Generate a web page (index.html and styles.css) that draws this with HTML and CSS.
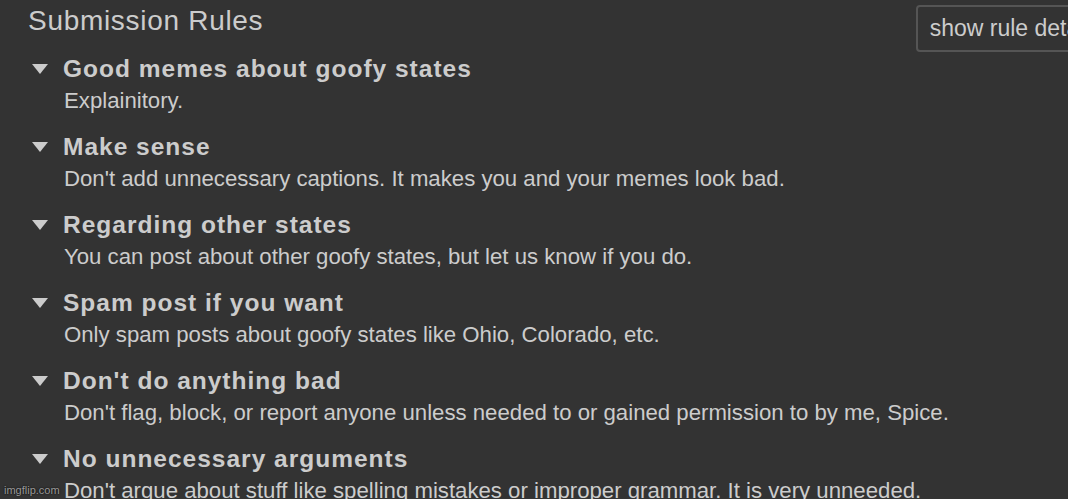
FILE: index.html
```html
<!DOCTYPE html>
<html>
<head>
	<title>Submission Rules</title>
	<link rel="stylesheet" href="styles.css">
</head>
<body>
	<div class="rules-panel">
		<div class="rules-header">
			<h2>Submission Rules</h2>
			<button class="toggle-details">show rule details</button>
		</div>

		<ul class="rule-list">
			<li class="rule">
				<div class="rule-title"><span class="caret"></span>Good memes about goofy states</div>
				<p class="rule-desc">Explainitory.</p>
			</li>
			<li class="rule">
				<div class="rule-title"><span class="caret"></span>Make sense</div>
				<p class="rule-desc">Don't add unnecessary captions. It makes you and your memes look bad.</p>
			</li>
			<li class="rule">
				<div class="rule-title"><span class="caret"></span>Regarding other states</div>
				<p class="rule-desc">You can post about other goofy states, but let us know if you do.</p>
			</li>
			<li class="rule">
				<div class="rule-title"><span class="caret"></span>Spam post if you want</div>
				<p class="rule-desc">Only spam posts about goofy states like Ohio, Colorado, etc.</p>
			</li>
			<li class="rule">
				<div class="rule-title"><span class="caret"></span>Don't do anything bad</div>
				<p class="rule-desc">Don't flag, block, or report anyone unless needed to or gained permission to by me, Spice.</p>
			</li>
			<li class="rule">
				<div class="rule-title"><span class="caret"></span>No unnecessary arguments</div>
				<p class="rule-desc">Don't argue about stuff like spelling mistakes or improper grammar. It is very unneeded.</p>
			</li>
		</ul>
	</div>

	<span class="watermark">imgflip.com</span>
</body>
</html>
```

FILE: styles.css
```css
html, body {
	height: 100%;
}

body {
	font-family: "Liberation Sans", Arial, sans-serif;
	margin: 0;
	background-color: #333;
	color: #ccc;
	overflow: hidden;
	position: relative;
}

.rules-panel {
	padding: 3px 0 0 28px;
}

.rules-header {
	display: flex;
	align-items: flex-start;
	height: 51px;
}

.rules-header h2 {
	flex: 1;
	margin: 0;
	font-size: 28px;
	font-weight: normal;
	letter-spacing: 0.7px;
	color: #ccc;
	line-height: 36px;
}

.toggle-details {
	flex-shrink: 0;
	margin: 2px -47px 0 0;
	height: 47px;
	padding: 0 12px;
	font-family: inherit;
	font-size: 23px;
	color: #ccc;
	background-color: #333;
	border: 2px solid #555;
	border-radius: 4px;
	white-space: nowrap;
	cursor: pointer;
}

.rule-list {
	list-style: none;
	margin: 0;
	padding: 0;
}

.rule {
	height: 78px;
}

.rule-title {
	display: flex;
	align-items: center;
	font-size: 24.5px;
	font-weight: bold;
	letter-spacing: 1px;
	line-height: 30px;
	color: #ccc;
}

.caret {
	width: 0;
	height: 0;
	margin: 0 15px 0 4px;
	border-left: 8px solid transparent;
	border-right: 8px solid transparent;
	border-top: 10px solid #ccc;
}

.rule-desc {
	margin: 4px 0 0 36px;
	font-size: 22.2px;
	line-height: 26px;
	color: #ccc;
}

.watermark {
	position: absolute;
	left: 4px;
	bottom: 3px;
	font-size: 11px;
	color: #999;
	text-shadow: 0 0 2px #000;
}
```
